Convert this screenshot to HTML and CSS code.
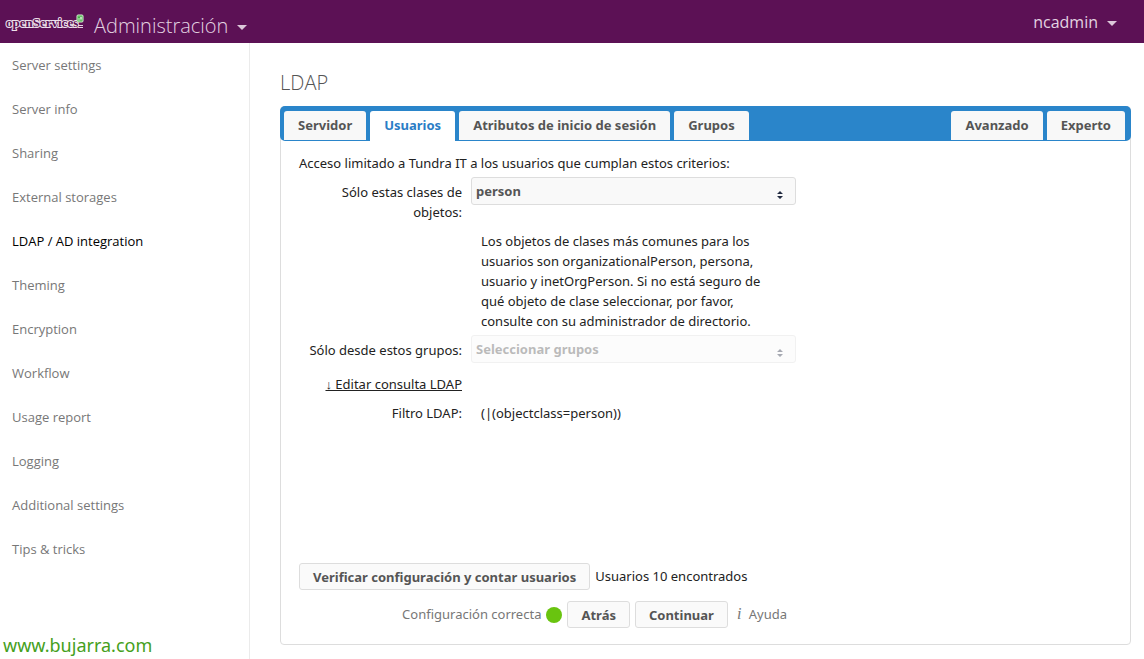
FILE: index.html
```html
<!DOCTYPE html>
<html lang="es">

<head>
    <meta charset="utf-8">
    <meta name="viewport" content="width=device-width, initial-scale=1">
    <title>Administración</title>
    <link rel="stylesheet" href="styles.css">
</head>

<body>

<header class="header">
    <a class="logo" href="#" aria-label="openServices">
        <svg width="80" height="20" viewBox="0 0 80 20">
            <text class="logo-text" x="1" y="15">openServices</text>
            <rect x="72" y="3" width="6" height="7" rx="1" fill="#3fae3f" stroke="#d9efd7"/>
            <path d="M74 6v3M74 4.500v.6M76 4.500v4M75 6h2" stroke="#fff" stroke-width=".8" fill="none"/>
            <path d="M73 13.500h5M73 15.500h5" stroke="#e4d3e2" stroke-width="1"/>
        </svg>
    </a>
    <button class="menu-title" type="button">
        Administración
        <svg class="caret" width="10" height="5" viewBox="0 0 10 5"><path d="M0 0h10L5 5z"/></svg>
    </button>
    <button class="menu-user" type="button">
        ncadmin
        <svg class="caret" width="10" height="5" viewBox="0 0 10 5"><path d="M0 0h10L5 5z"/></svg>
    </button>
</header>

<div class="layout">

    <nav class="sidebar">
        <ul>
            <li><a href="#">Server settings</a></li>
            <li><a href="#">Server info</a></li>
            <li><a href="#">Sharing</a></li>
            <li><a href="#">External storages</a></li>
            <li><a class="active" href="#">LDAP / AD integration</a></li>
            <li><a href="#">Theming</a></li>
            <li><a href="#">Encryption</a></li>
            <li><a href="#">Workflow</a></li>
            <li><a href="#">Usage report</a></li>
            <li><a href="#">Logging</a></li>
            <li><a href="#">Additional settings</a></li>
            <li><a href="#">Tips &amp; tricks</a></li>
        </ul>
        <a class="site" href="#">www.bujarra.com</a>
    </nav>

    <main class="content">
        <h2>LDAP</h2>

        <form class="panel">
            <div class="tabs">
                <a href="#">Servidor</a>
                <a class="selected" href="#">Usuarios</a>
                <a href="#">Atributos de inicio de sesión</a>
                <a href="#">Grupos</a>
                <a class="push" href="#">Avanzado</a>
                <a href="#">Experto</a>
            </div>

            <div class="tab-body">
                <p class="intro">Acceso limitado a Tundra IT a los usuarios que cumplan estos criterios:</p>

                <div class="fields">
                    <label for="object_classes">Sólo estas clases de objetos:</label>
                    <div class="select">
                        <select id="object_classes">
                            <option>person</option>
                        </select>
                        <svg width="6" height="8" viewBox="0 0 6 8"><path d="M0 3L3 0l3 3zM0 5h6L3 8z"/></svg>
                    </div>

                    <p class="hint">Los objetos de clases más comunes para los usuarios son organizationalPerson, persona, usuario y inetOrgPerson. Si no está seguro de qué objeto de clase seleccionar, por favor, consulte con su administrador de directorio.</p>

                    <label for="groups">Sólo desde estos grupos:</label>
                    <div class="select disabled">
                        <select id="groups" disabled>
                            <option>Seleccionar grupos</option>
                        </select>
                        <svg width="6" height="8" viewBox="0 0 6 8"><path d="M0 3L3 0l3 3zM0 5h6L3 8z"/></svg>
                    </div>

                    <a class="edit" href="#">↓ Editar consulta LDAP</a>

                    <span class="filter-label">Filtro LDAP:</span>
                    <span class="filter">(|(objectclass=person))</span>
                </div>

                <div class="verify">
                    <button class="btn" type="button">Verificar configuración y contar usuarios</button>
                    <span>Usuarios 10 encontrados</span>
                </div>

                <div class="controls">
                    <span>Configuración correcta</span>
                    <span class="status"></span>
                    <button class="btn" type="button">Atrás</button>
                    <button class="btn" type="button">Continuar</button>
                    <a class="help" href="#"><i>i</i> Ayuda</a>
                </div>
            </div>
        </form>
    </main>

</div>

</body>

</html>
```

FILE: styles.css
```css
* {
    box-sizing: border-box;
}

body {
    display: flex;
    flex-direction: column;
    min-height: 100vh;
    margin: 0;
    background: #fff;
    color: #222;
    font-family: "Open Sans", sans-serif;
    font-size: 13px;
    line-height: 20px;
}

a {
    color: inherit;
    text-decoration: none;
}

h2, p, ul {
    margin: 0;
    padding: 0;
    font-weight: normal;
}

button, select {
    font-family: inherit;
    font-size: 13px;
}

/* header */
.header {
    display: flex;
    align-items: center;
    height: 43px;
    padding: 0 27px 0 5px;
    background: #5c1155;
}

.logo, .logo svg {
    display: block;
}

.logo-text {
    fill: #5c1155;
    stroke: #ecdfea;
    stroke-width: 2px;
    paint-order: stroke;
    font-family: "Liberation Serif", serif;
    font-size: 13px;
    font-weight: bold;
}

.menu-title, .menu-user {
    display: flex;
    align-items: center;
    gap: 9px;
    padding: 0;
    border: 0;
    background: none;
    color: #e3d3e1;
}

.menu-title {
    padding: 8px 0 0 9px;
    font-size: 20px;
    font-weight: 300;
}

.menu-user {
    margin-left: auto;
    font-size: 16px;
}

.caret {
    fill: #dcc8da;
    margin-top: 3px;
}

/* sidebar */
.layout {
    display: flex;
    flex: 1;
}

.sidebar {
    display: flex;
    flex-direction: column;
    flex: 0 0 250px;
    border-right: 1px solid #ebebeb;
}

.sidebar ul {
    list-style: none;
}

.sidebar li a {
    display: block;
    padding: 0 12px;
    color: #777;
    line-height: 44px;
}

.sidebar li a.active {
    color: #000;
}

.site {
    margin-top: auto;
    padding: 0 3px 4px;
    color: #45a01c;
    font-family: "Noto Sans", sans-serif;
    font-size: 18px;
}

/* content */
.content {
    display: flex;
    flex-direction: column;
    flex: 1;
    padding: 30px 13px 14px 30px;
}

h2 {
    margin-bottom: 13px;
    color: #555;
    font-size: 20px;
    font-weight: 300;
}

.panel {
    display: flex;
    flex-direction: column;
    flex: 1;
    border: 1px solid #ddd;
    border-radius: 4px;
    font-family: "Noto Sans", sans-serif;
}

.tabs {
    display: flex;
    gap: 4px;
    margin: -1px -1px 0;
    padding: 5px 6px 1px 4px;
    border-radius: 5px;
    background: #2a85ca;
}

.tabs a {
    padding: 0 14px;
    border-radius: 3px 3px 0 0;
    background: #f8f8f8;
    color: #555;
    font-weight: bold;
    line-height: 29px;
}

.tabs a.selected {
    margin-bottom: -1px;
    background: #fff;
    color: #2a7dc6;
}

.tabs .push {
    margin-left: auto;
}

.tab-body {
    display: flex;
    flex-direction: column;
    flex: 1;
    padding: 12px 18px 16px;
}

.fields {
    display: grid;
    grid-template-columns: 163px 325px;
    column-gap: 9px;
    margin-top: 4px;
}

.fields label, .filter-label {
    padding-top: 5px;
    text-align: right;
}

.select {
    position: relative;
}

.select select {
    width: 100%;
    height: 28px;
    padding: 0 4px;
    border: 1px solid #ddd;
    border-radius: 3px;
    background: #f9f9f9;
    color: #555;
    font-weight: bold;
    appearance: none;
}

.select svg {
    position: absolute;
    top: 14px;
    right: 13px;
    fill: #222b40;
    pointer-events: none;
}

.disabled {
    opacity: .4;
}

.disabled select {
    opacity: 1;
}

.hint {
    grid-column: 2;
    padding: 9px 20px 4px 10px;
}

.edit {
    grid-column: 1;
    justify-self: end;
    margin-top: 11px;
    text-decoration: underline;
}

.filter-label {
    grid-column: 1;
    margin-top: 4px;
}

.filter {
    padding: 9px 0 0 10px;
}

.verify, .controls {
    display: flex;
    align-items: center;
    gap: 5px;
}

.verify {
    margin-top: auto;
}

.verify span, .controls .help, .controls span:first-child {
    padding-bottom: 2px;
}

.controls {
    width: 492px;
    margin-top: 11px;
    justify-content: flex-end;
    color: #777;
}

.btn {
    height: 27px;
    padding: 0 13px;
    border: 1px solid #ddd;
    border-radius: 3px;
    background: #fafafa;
    color: #555;
    font-weight: bold;
}

.status {
    width: 16px;
    height: 16px;
    border-radius: 50%;
    background: #69c40f;
}

.help {
    padding: 0 4px;
}

.help i {
    margin-right: 4px;
    font-family: "Liberation Serif", serif;
    font-size: 16px;
}
```
